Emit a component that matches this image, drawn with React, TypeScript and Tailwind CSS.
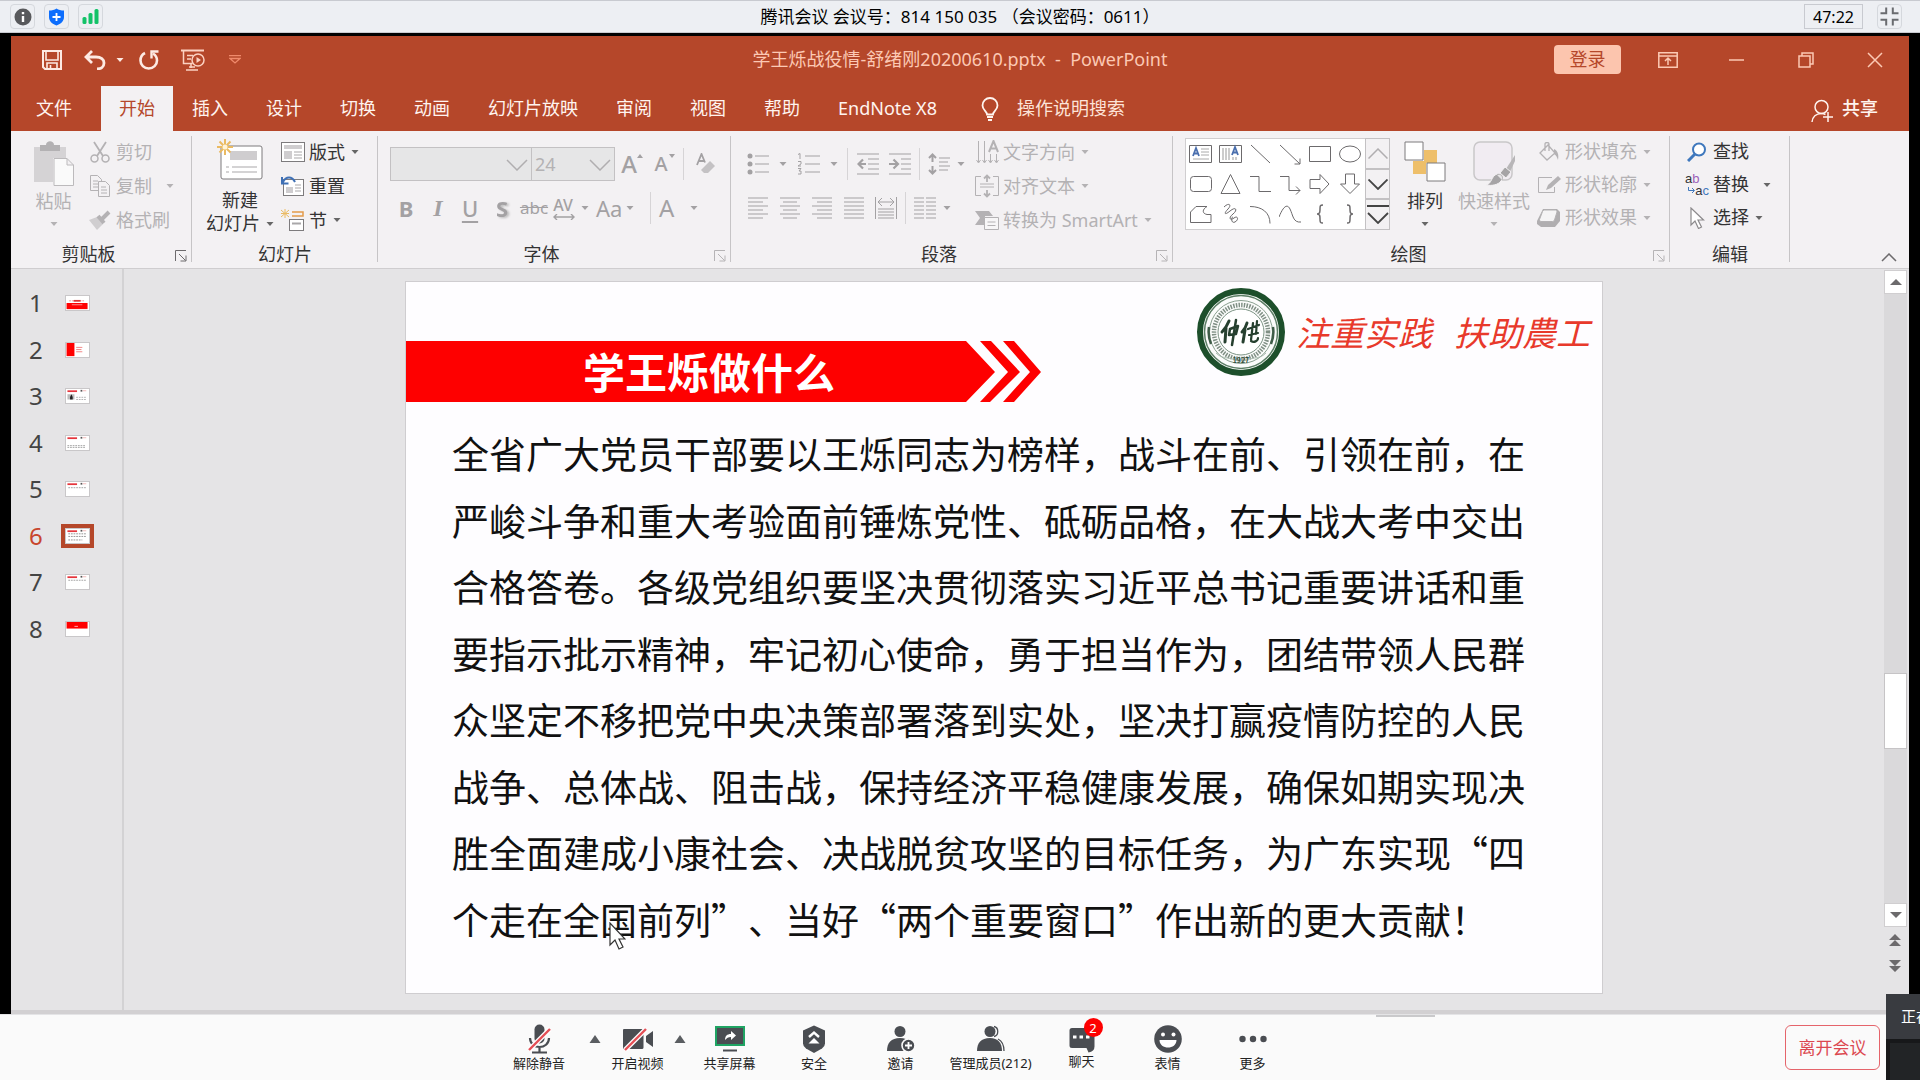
import type { ReactNode } from 'react';
import { clsx } from 'clsx';

const Svg = ({
  w,
  h,
  children,
  className,
}: {
  w: number;
  h: number;
  children: ReactNode;
  className?: string;
}) => (
  <svg
    width={w}
    height={h}
    viewBox={`0 0 ${w} ${h}`}
    fill="none"
    stroke="currentColor"
    className={clsx('shrink-0', className)}
    aria-hidden="true"
  >
    {children}
  </svg>
);

const Caret = ({ className }: { className?: string }) => (
  <Svg w={8} h={4} className={className}>
    <path d="M0.5 0h7L4 4z" fill="currentColor" stroke="none" />
  </Svg>
);

const Divider = ({ className }: { className?: string }) => (
  <span className={clsx('h-8 w-px shrink-0 bg-[#d6d4d6]', className)} />
);

/* ---------- meeting bar ---------- */

const badgeBox =
  'flex size-[25px] items-center justify-center rounded-sm border border-[#d5d8dd]';

const MeetingBar = () => (
  <header className="grid h-[33px] shrink-0 grid-cols-[1fr_auto_1fr] items-center border-t border-b border-[#c8cad0] bg-[#edeff3] text-[17px] text-black">
    <div className="flex gap-[9px] pl-[10px]">
      <button className={badgeBox} aria-label="信息">
        <Svg w={18} h={18}>
          <circle cx="9" cy="9" r="8.500" fill="#58595c" stroke="none" />
          <path d="M9 8v6M9 4v2.200" stroke="#fff" strokeWidth="2.400" />
        </Svg>
      </button>
      <button className={badgeBox} aria-label="安全">
        <Svg w={17} h={18}>
          <path
            d="M8.500 0.500c2 1.500 4.500 2 7.500 2v6.500c0 4-3 7-7.500 8.500C4 16 1 13 1 9V2.500c3 0 5.500-.5 7.500-2z"
            fill="#0d6efd"
            stroke="none"
          />
          <path d="M8.500 5v8M4.500 9h8" stroke="#fff" strokeWidth="1.800" />
        </Svg>
      </button>
      <button className={badgeBox} aria-label="网络">
        <Svg w={17} h={15}>
          <g fill="#12c268" stroke="none">
            <rect x="0.500" y="8" width="4" height="7" rx="1.500" />
            <rect x="6.500" y="4" width="4" height="11" rx="1.500" />
            <rect x="12.500" y="0" width="4" height="15" rx="1.500" />
          </g>
        </Svg>
      </button>
    </div>
    <h1>腾讯会议 会议号：814 150 035 （会议密码：0611）</h1>
    <div className="flex justify-end gap-[14px] pr-[18px]">
      <time className="flex h-[25px] w-[59px] items-center justify-center border border-[#c8cad0] text-base">
        47:22
      </time>
      <button className={badgeBox} aria-label="退出全屏">
        <Svg w={19} h={19}>
          <path
            d="M0.500 6.200H6.200V0.500M12.800 0.500V6.200H18.500M0.500 12.800H6.200V18.500M12.800 18.500V12.800H18.500"
            stroke="#6a6c70"
            strokeWidth="2"
          />
        </Svg>
      </button>
    </div>
  </header>
);

/* ---------- PowerPoint title and tabs ---------- */

const TitleBar = () => (
  <div className="grid h-[50px] grid-cols-[1fr_auto_1fr] items-center pb-[3px] text-[#fcc9b4]">
    <div className="flex items-center pl-[31px] text-[#fdeae3]">
      <button aria-label="保存">
        <Svg w={20} h={20}>
          <path d="M1 1h18v18H3l-2-2z" strokeWidth="2" />
          <path d="M4 2v8h12V2M5 19v-6h10v6M8.500 15v4" strokeWidth="1.600" />
        </Svg>
      </button>
      <button className="ml-[22px] flex items-center gap-[10px]" aria-label="撤消">
        <Svg w={22} h={20}>
          <path d="M8 1L2 7l6 6M2 7h10c5 0 8 2.500 8 6s-3 6-7 6" strokeWidth="2.800" />
        </Svg>
        <Caret />
      </button>
      <button className="ml-[15px]" aria-label="重复">
        <Svg w={20} h={20}>
          <path d="M6 3C3 4.500 1.500 7 1.500 10.500c0 4.500 3.500 8 8.200 8s8.300-3.500 8.300-8c0-3-1.500-5.500-4-7" strokeWidth="2.600" />
          <path d="M19.500 1.500h-7v7" strokeWidth="2.400" />
        </Svg>
      </button>
      <button className="ml-[22px] text-[#fcd2c2]" aria-label="从头开始">
        <Svg w={24} h={22}>
          <path d="M0 1.500h23" strokeWidth="2" />
          <path d="M2.500 2v12.500h9M6 6.500h6M6 10h4M10 15v4M5 21h12M8 18h6" strokeWidth="1.500" />
          <circle cx="17" cy="11" r="6" strokeWidth="1.500" />
          <path d="M15.500 8l4.500 3-4.500 3z" fill="currentColor" stroke="none" />
        </Svg>
      </button>
      <button className="ml-[24px] text-[#f08a6c]" aria-label="自定义快速访问工具栏">
        <Svg w={12} h={9}>
          <path d="M0 0.700h12M1 3.500h10L6 8z" strokeWidth="1.300" />
        </Svg>
      </button>
    </div>
    <h2 className="text-[18px] whitespace-pre">
      学王烁战役情-舒绪刚20200610.pptx{'  -  '}PowerPoint
    </h2>
    <div className="flex items-center justify-end">
      <button className="mr-3 h-[29px] w-[67px] rounded-sm bg-[#fcc5ae] text-[18px] leading-[29px] text-[#b5472a]">
        登录
      </button>
      <button className="flex w-[69px] justify-center" aria-label="功能区显示选项">
        <Svg w={20} h={16}>
          <path d="M0.800 0.800h18.400v14.400H0.800zM1 4h18M10 13V6.500M7 9l3-3 3 3" strokeWidth="1.500" />
        </Svg>
      </button>
      <button className="flex w-[69px] justify-center" aria-label="最小化">
        <Svg w={15} h={2}>
          <path d="M0 1h15" strokeWidth="1.500" />
        </Svg>
      </button>
      <button className="flex w-[69px] justify-center" aria-label="还原">
        <Svg w={16} h={16}>
          <path d="M1 4h11v11H1zM4 4V1h11v11h-3" strokeWidth="1.500" />
        </Svg>
      </button>
      <button className="flex w-[69px] justify-center" aria-label="关闭">
        <Svg w={16} h={16}>
          <path d="M1 1l14 14M15 1L1 15" strokeWidth="1.500" />
        </Svg>
      </button>
    </div>
  </div>
);

const tabs = ['插入', '设计', '切换', '动画', '幻灯片放映', '审阅', '视图', '帮助', 'EndNote X8'];

const TabBar = () => (
  <nav className="flex h-[45px] items-center text-[18px] text-[#fff4ef]">
    <button className="w-[90px] pr-1">文件</button>
    <button className="h-full bg-[#f3f1f3] px-[18px] text-[#b5472a]">开始</button>
    {tabs.map(tab => (
      <button key={tab} className="px-[19px] whitespace-nowrap">
        {tab}
      </button>
    ))}
    <label className="ml-[25px] flex items-center gap-[18px]">
      <Svg w={18} h={24}>
        <path d="M6 17.500c0-3-4.500-4.500-4.500-9A7.500 7.500 0 0 1 9 1a7.500 7.500 0 0 1 7.500 7.500c0 4.500-4.500 6-4.500 9zM6 20h6M7 23h4" strokeWidth="1.800" />
      </Svg>
      <input
        className="w-[160px] bg-transparent outline-none placeholder:text-[#fde3d8]"
        placeholder="操作说明搜索"
        aria-label="操作说明搜索"
      />
    </label>
    <button className="mr-[31px] ml-auto flex items-center gap-2 font-medium">
      <Svg w={23} h={24} className="mt-1">
        <circle cx="10.500" cy="8" r="6.500" strokeWidth="1.500" />
        <path d="M1 23c.5-5 4-8.500 9.500-8.500 2 0 3 .5 4 1M17 13v10M12 18h10" strokeWidth="1.500" />
      </Svg>
      共享
    </button>
  </nav>
);

/* ---------- ribbon ---------- */

const Launcher = ({ dark }: { dark?: boolean }) => (
  <button
    className={clsx('absolute right-[5px] bottom-[6px]', dark ? 'text-[#6c6a6c]' : 'text-[#b5b3b5]')}
    aria-label="更多设置"
  >
    <Svg w={12} h={12}>
      <path d="M0.500 11V0.500H11M4 4l6.500 6.500M11 5.500V11H5.500" />
    </Svg>
  </button>
);

const Group = ({
  label,
  className,
  children,
  launcher,
}: {
  label: string;
  className: string;
  children: ReactNode;
  launcher?: 'dark' | 'light';
}) => (
  <section
    aria-label={label}
    className={clsx(
      'relative flex shrink-0 flex-col after:absolute after:top-[5px] after:right-0 after:h-[126px] after:w-px after:bg-[#c6c4c6]',
      className,
    )}
  >
    <div className="flex h-[110px] pt-1">{children}</div>
    <h3
      className={clsx(
        'text-center text-[18px] leading-[28px] text-[#333]',
        launcher && 'pr-[26px]',
      )}
    >
      {label}
    </h3>
    {launcher && <Launcher dark={launcher === 'dark'} />}
  </section>
);

const Row = ({
  icon,
  text,
  caret,
  off,
  tight,
  caretGap,
}: {
  icon: ReactNode;
  text: string;
  caret?: boolean;
  off?: boolean;
  tight?: boolean;
  caretGap?: string;
}) => (
  <button
    className={clsx(
      'flex items-center text-[18px] whitespace-nowrap',
      tight ? 'h-[33px]' : 'h-[34px]',
      off ? 'text-[#b4b2b4]' : 'text-[#333]',
    )}
  >
    <span className="mr-1 flex w-6 justify-center">{icon}</span>
    {text}
    {caret && <Caret className={clsx(caretGap ?? 'ml-[6px]', !off && 'text-[#666]')} />}
  </button>
);

const ClipboardGroup = () => (
  <Group label="剪贴板" className="w-[181px]" launcher="dark">
    <button className="ml-4 flex w-[53px] flex-col items-center pt-[6px] text-[18px] leading-[28px] text-[#b4b2b4]">
      <Svg w={42} h={46}>
        <path d="M1 6h32v11H20v24H1z" fill="#d5d3d5" stroke="none" />
        <path d="M7 4h6c0-5 8-5 8 0h6v6H7z" fill="#b3b1b3" stroke="none" />
        <path d="M21 17.500h13l6.500 6.500v20.500H21zM34 17.500v6.500h6.500" fill="#fafafa" stroke="#bcbabc" />
      </Svg>
      粘贴
      <Caret className="mt-[7px]" />
    </button>
    <div className="ml-2 flex flex-col">
      <Row
        off
        text="剪切"
        icon={
          <Svg w={20} h={22}>
            <path d="M4 1l9 14M16 1L7 15" strokeWidth="1.800" />
            <circle cx="4.500" cy="17.500" r="3.500" strokeWidth="1.500" />
            <circle cx="15.500" cy="17.500" r="3.500" strokeWidth="1.500" />
          </Svg>
        }
      />
      <Row
        off
        text="复制"
        caret
        caretGap="ml-[14px]"
        icon={
          <Svg w={20} h={22}>
            <path d="M0.500 0.500h7l4 4v11h-11zM3 6h5M3 9h6M3 12h6" />
            <path d="M8.500 6.500h7l4 4v11h-11z" fill="#f3f1f3" />
            <path d="M11 12h5M11 15h6M11 18h6" />
          </Svg>
        }
      />
      <Row
        off
        text="格式刷"
        icon={
          <Svg w={22} h={20}>
            <path d="M0 10l8-3 6 7-6 6z" fill="#d0ced0" stroke="none" />
            <path d="M9 6l6 7M13 9l7-7" strokeWidth="4" />
          </Svg>
        }
      />
    </div>
  </Group>
);

const SlidesGroup = () => (
  <Group label="幻灯片" className="w-[186px]">
    <button className="ml-[14px] flex w-[68px] flex-col items-center pt-[4px] text-[18px] leading-[23px] text-[#333]">
      <Svg w={46} h={42} className="mb-[8px]">
        <rect x="4" y="7" width="41" height="33" rx="2" fill="#fff" stroke="#7d7b7d" />
        <path d="M13 12h27v9H13z" fill="#cfcdcf" stroke="none" />
        <path d="M9 28h3M9 33h3M15 28h25M15 33h25" stroke="#a9a7a9" />
        <path d="M8 0v16M0 8h16M2.500 2.500l11 11M13.500 2.500l-11 11" stroke="#eaba62" strokeWidth="2" />
        <circle cx="8" cy="8" r="2.500" fill="#fff3d8" stroke="none" />
      </Svg>
      新建
      <span className="flex items-center gap-[6px] whitespace-nowrap">
        幻灯片
        <Caret className="text-[#666]" />
      </span>
    </button>
    <div className="ml-[7px] flex flex-col">
      <Row
        text="版式"
        caret
        icon={
          <Svg w={24} h={20}>
            <rect x="0.500" y="0.500" width="23" height="19" fill="#fff" stroke="#7d7b7d" />
            <path d="M3 3h18v4H3zM3 9h8v8H3z" fill="#cfcdcf" stroke="none" />
            <path d="M13 10h8M13 13h8M13 16h8" stroke="#a9a7a9" />
          </Svg>
        }
      />
      <Row
        text="重置"
        icon={
          <Svg w={24} h={20}>
            <rect x="2.500" y="3.500" width="20" height="16" fill="#fff" stroke="#7d7b7d" />
            <path d="M5 11h7v6H5z" fill="#cfcdcf" stroke="none" />
            <path d="M14 9h6M14 12h6M14 15h6" stroke="#a9a7a9" />
            <path d="M14 6C11 0 5 0 2 6M1 1v6.500h6.500" stroke="#3f70b5" strokeWidth="2" />
          </Svg>
        }
      />
      <Row
        text="节"
        caret
        icon={
          <Svg w={24} h={22}>
            <path d="M0 1l8 7M8 1L0 8M4 0v9M0 4.500h8" stroke="#eaba62" />
            <path d="M11 3h11v4H11" stroke="#e39a4a" strokeWidth="1.500" />
            <rect x="8.500" y="10.500" width="14" height="11" fill="#fff" stroke="#7d7b7d" />
            <path d="M11 14.500h9" stroke="#a9a7a9" strokeWidth="2" />
          </Svg>
        }
      />
    </div>
  </Group>
);

const selectBox =
  'h-[34px] w-full appearance-none border border-[#c3c1c3] bg-[#e6e6e7] pl-[3px] text-[18px] text-[#b4b2b4] outline-none';

const BoxChevron = () => (
  <Svg w={22} h={12} className="pointer-events-none absolute top-[12px] right-1 text-[#b0aeb0]">
    <path d="M1 1l10 10L21 1" strokeWidth="1.500" />
  </Svg>
);

const FontGroup = () => (
  <Group label="字体" className="w-[353px] text-[#a3a1a3]" launcher="light">
    <div className="ml-3 flex flex-col">
      <div className="flex items-center pt-3">
        <div className="relative w-[142px]">
          <select className={selectBox} aria-label="字体" />
          <BoxChevron />
        </div>
        <div className="relative -ml-px w-[84px]">
          <select className={selectBox} aria-label="字号">
            <option>24</option>
          </select>
          <BoxChevron />
        </div>
        <button className="relative ml-[4px] w-5 text-[24px] leading-[34px] font-medium" aria-label="增大字号">
          A
          <Svg w={6} h={4} className="absolute top-[7px] -right-1">
            <path d="M0 4h6L3 0z" fill="currentColor" stroke="none" />
          </Svg>
        </button>
        <button className="relative ml-3 w-5 text-[20px] leading-[34px] font-medium" aria-label="减小字号">
          A
          <Svg w={6} h={4} className="absolute top-[7px] -right-1">
            <path d="M0 0h6L3 4z" fill="currentColor" stroke="none" />
          </Svg>
        </button>
        <Divider className="mx-3" />
        <button aria-label="清除所有格式">
          <Svg w={20} h={22}>
            <path d="M1 12L5.500 1 9 9.500M3 8h5" strokeWidth="1.800" />
            <path d="M5 17l9-9 5 5-7 7H8z" fill="#c4c2c4" stroke="none" />
          </Svg>
        </button>
      </div>
      <div className="flex h-[46px] items-center pt-2 text-[22px]">
        <button className="w-8 font-bold">B</button>
        <button className="w-8 font-['Liberation_Serif',serif] text-[24px] font-bold italic">I</button>
        <button className="w-8 font-medium underline underline-offset-4">U</button>
        <button className="w-8 font-bold drop-shadow-[2px_1px_1px_#bbb]">S</button>
        <button className="w-8 text-[17px] line-through">abc</button>
        <button className="flex w-[46px] items-center gap-[4px] pl-[3px]" aria-label="字符间距">
          <span className="relative w-5 text-[16px] leading-[18px] font-medium">
            AV
            <Svg w={22} h={6}>
              <path d="M1 3h20M4 0L1 3l3 3M18 0l3 3-3 3" strokeWidth="1.400" />
            </Svg>
          </span>
          <Caret className="ml-1" />
        </button>
        <button className="flex w-[46px] items-center gap-[4px]" aria-label="更改大小写">
          Aa
          <Caret />
        </button>
        <Divider className="mx-[8px]" />
        <button className="flex items-center gap-[16px] text-[24px]" aria-label="字体颜色">
          A
          <Caret />
        </button>
      </div>
    </div>
  </Group>
);

const Lines = ({ d }: { d: string }) => (
  <Svg w={22} h={22}>
    <path d={d} />
  </Svg>
);

const ParagraphGroup = () => (
  <Group label="段落" className="w-[442px] text-[#a3a1a3]" launcher="light">
    <div className="ml-4 flex w-[228px] flex-col">
      <div className="flex h-[46px] items-center pt-3">
        <button className="flex items-center gap-[10px]" aria-label="项目符号">
          <Svg w={22} h={22}>
            <path d="M8 3h14M8 11h14M8 19h14" />
            <g fill="currentColor" stroke="none">
              <circle cx="3" cy="3" r="2.500" />
              <circle cx="3" cy="11" r="2.500" />
              <circle cx="3" cy="19" r="2.500" />
            </g>
          </Svg>
          <Caret />
        </button>
        <button className="ml-[10px] flex items-center gap-[10px]" aria-label="编号">
          <Svg w={23} h={22}>
            <path d="M8 3h15M8 11h15M8 19h15M1 1.500l2-1V6M1 8.500h3V11l-3 2h3M1 15.500h3l-2 2.500h2v3H1" />
          </Svg>
          <Caret />
        </button>
        <Divider className="mx-[9px]" />
        <button aria-label="减少缩进量">
          <Svg w={22} h={22}>
            <path d="M0 1h22M11 6h11M11 11h11M11 16h11M0 21h22" />
            <path d="M9 11H2M6 6.500L1.500 11 6 15.500" strokeWidth="2.200" />
          </Svg>
        </button>
        <button className="ml-[10px]" aria-label="增加缩进量">
          <Svg w={22} h={22}>
            <path d="M0 1h22M12 6h10M12 11h10M12 16h10M0 21h22" />
            <path d="M0 11h8M4.500 6.500L9 11l-4.500 4.500" strokeWidth="2.200" />
          </Svg>
        </button>
        <Divider className="mx-[8px]" />
        <button className="flex items-center gap-[7px]" aria-label="行距">
          <Svg w={22} h={22}>
            <path d="M11 5h11M11 9h9M11 13h11M11 17h9" />
            <path d="M4.500 2v7M4.500 13v7M1 5l3.500-3.500L8 5M1 17l3.500 3.500L8 17" strokeWidth="2" />
          </Svg>
          <Caret />
        </button>
      </div>
      <div className="flex h-[46px] items-center gap-[10px] pt-2">
        <button aria-label="左对齐">
          <Lines d="M1 1h20M1 5h15M1 9h20M1 13h15M1 17h20M1 21h15" />
        </button>
        <button aria-label="居中">
          <Lines d="M1 1h20M4 5h14M1 9h20M4 13h14M1 17h20M4 21h14" />
        </button>
        <button aria-label="右对齐">
          <Lines d="M1 1h20M6 5h15M1 9h20M6 13h15M1 17h20M6 21h15" />
        </button>
        <button aria-label="两端对齐">
          <Lines d="M1 1h20M1 5h20M1 9h20M1 13h20M1 17h20M1 21h20" />
        </button>
        <button aria-label="分散对齐">
          <Lines d="M0.500 0v22M21.500 0v22M3 5h16M7 1L3 5l4 4M15 1l4 4-4 4M3 12h16M3 15h16M3 18h16M3 21h16" />
        </button>
        <Divider className="-mx-[2px]" />
        <button className="flex items-center gap-[7px]" aria-label="分栏">
          <Lines d="M0 1h10M0 5h10M0 9h10M0 13h10M0 17h10M0 21h10M12 1h10M12 5h10M12 9h10M12 13h10M12 17h10M12 21h10" />
          <Caret />
        </button>
      </div>
    </div>
    <div className="flex flex-col">
      <Row
        off
        caret
        text="文字方向"
        icon={
          <Svg w={23} h={24}>
            <path d="M2.500 1v21M8.500 1v21M14.500 14v8M20.500 14v8M0.500 20l2 3 2-3M6.500 20l2 3 2-3M12.500 20l2 3 2-3M18.500 20l2 3 2-3" />
            <path d="M13 12l4.500-11L22 12M14.500 8.500h6" strokeWidth="2" />
          </Svg>
        }
      />
      <Row
        off
        caret
        text="对齐文本"
        icon={
          <Svg w={24} h={24}>
            <path d="M6 2.500H0.500v19H6M18 2.500h5.500v19H18M5 10h14M5 13h14" />
            <path d="M12 8V2M12 16v6M9 4.500L12 1.500l3 3M9 19.500l3 3 3-3" strokeWidth="1.800" />
          </Svg>
        }
      />
      <Row
        off
        caret
        text="转换为 SmartArt"
        icon={
          <Svg w={24} h={19}>
            <path d="M0 0h14l4 5H10v9H0l5-7z" fill="#b4b2b4" stroke="none" />
            <path d="M9.500 6.500h14v12h-14z" fill="#f7f6f7" />
            <path d="M12.500 11h8M12.500 14.500h8" />
          </Svg>
        }
      />
    </div>
  </Group>
);

const shapes: { name: string; art: ReactNode }[] = [
  {
    name: '文本框',
    art: (
      <>
        <path d="M0.500 2.500h22v17H0.500z" />
        <path d="M4 13l3-8 3 8M5 10.500h4" stroke="#4a6fae" strokeWidth="1.800" />
        <path d="M12 6h8M12 9h8M12 12h8M4 16h16" stroke="#aaa" />
      </>
    ),
  },
  {
    name: '竖排文本框',
    art: (
      <>
        <path d="M0.500 2.500h22v17H0.500z" />
        <path d="M13 12l3-8 3 8M14 9.500h4" stroke="#4a6fae" strokeWidth="1.800" />
        <path d="M4 5v12M7 5v12M10 5v12M14 14v3M17 14v3" stroke="#999" />
      </>
    ),
  },
  { name: '直线', art: <path d="M2 2l19 18" /> },
  { name: '箭头', art: <path d="M1 2l20 19M21 15.500V21h-5.500" /> },
  { name: '矩形', art: <path d="M0.500 3.500h21v15h-21z" /> },
  { name: '椭圆', art: <ellipse cx="11" cy="11" rx="10.500" ry="8" /> },
  { name: '圆角矩形', art: <rect x="1.500" y="3.500" width="21" height="15" rx="3" /> },
  { name: '三角形', art: <path d="M11.500 1.500L21 20.500H2z" /> },
  { name: '肘形连接符', art: <path d="M1 3.500h9v15h12" /> },
  { name: '肘形箭头', art: <path d="M1 3.500h9v14h11M17 13.500l4 4-4 4" /> },
  { name: '右箭头', art: <path d="M1 6.500h10v-5l9 9.500-9 9.500v-5H1z" /> },
  { name: '下箭头', art: <path d="M6.500 1v10h-5l9.500 9.500L20.500 11h-5V1z" /> },
  { name: '任意多边形', art: <path d="M1.500 19.500V9L7 3.500h11c-5 3-5 7 0 8h4v8z" /> },
  { name: '自由曲线', art: <path d="M5 4c5-5 8-2 4 2s-4 7 2 2 8-1 3 3-3 7 1 4 5 2 1 4-4-5-2-5" /> },
  { name: '弧形', art: <path d="M1 3.500c12 0 20 6 20 17" /> },
  { name: '曲线', art: <path d="M0 14C4 4 8 0 11 6s3 14 11 13" /> },
  { name: '左大括号', art: <path d="M14 2c-3 0-3 1-3 4s0 5-3 5c3 0 3 2 3 5s0 4 3 4" strokeWidth="1.500" /> },
  { name: '右大括号', art: <path d="M8 2c3 0 3 1 3 4s0 5 3 5c-3 0-3 2-3 5s0 4-3 4" strokeWidth="1.500" /> },
];

const galleryBtn = 'flex flex-1 items-center justify-center border border-[#c3c1c3]';

const DrawingGroup = () => (
  <Group label="绘图" className="w-[497px]" launcher="light">
    <div className="mt-[3px] ml-[12px] flex h-[92px] w-[205px] shrink-0">
      <div className="grid flex-1 grid-cols-6 border border-[#d0ced0] bg-white text-[#6c6a6c]">
        {shapes.map(({ name, art }) => (
          <button key={name} className="flex items-center justify-center" aria-label={name}>
            <Svg w={23} h={22}>
              {art}
            </Svg>
          </button>
        ))}
      </div>
      <div className="-ml-px flex w-[25px] flex-col text-[#444]">
        <button className={clsx(galleryBtn, 'text-[#b0aeb0]')} aria-label="上一行">
          <Svg w={20} h={11}>
            <path d="M0.500 10.500L10 1l9.500 9.500" strokeWidth="1.500" />
          </Svg>
        </button>
        <button className={galleryBtn} aria-label="下一行">
          <Svg w={20} h={11}>
            <path d="M0.500 0.500L10 10l9.500-9.500" strokeWidth="1.800" />
          </Svg>
        </button>
        <button className={galleryBtn} aria-label="其他形状">
          <Svg w={22} h={19}>
            <path d="M0 1h22M1 8l10 10 10-10" strokeWidth="1.800" />
          </Svg>
        </button>
      </div>
    </div>
    <button className="ml-[13px] flex w-[44px] shrink-0 flex-col items-center pt-[6px] text-[18px] leading-[28px] text-[#333]">
      <Svg w={42} h={46}>
        <path d="M20 9h13v13H20zM9 20h13v13H9z" fill="#eebf6a" stroke="none" />
        <path d="M1 1h18v18H1zM23 22h18v18H23z" fill="#fff" stroke="#7d7b7d" />
      </Svg>
      排列
      <Caret className="mt-[7px] text-[#666]" />
    </button>
    <button className="ml-[10px] flex w-[74px] shrink-0 flex-col items-center pt-[6px] text-[18px] leading-[28px] whitespace-nowrap text-[#b4b2b4]">
      <Svg w={42} h={46}>
        <rect x="1" y="1" width="38" height="38" rx="6" stroke="#c9c7c9" strokeWidth="1.500" fill="#f1ecf2" />
        <path d="M42 14L31 31l4 4 7-15z" fill="#b8b6b8" stroke="none" />
        <path d="M32 26l6 5-5 6-6-5z" fill="#a6a4a6" stroke="#f3f1f3" />
        <path d="M13 44c6-1 5-9 11-11 5-1 7 4 4 7-3 4-9 5-15 4z" fill="#a6a4a6" stroke="#f3f1f3" />
        <path d="M24 34c3-2 7 1 5 5" fill="#e6e4e6" stroke="#b4b2b4" />
      </Svg>
      快速样式
      <Caret className="mt-[7px]" />
    </button>
    <div className="ml-[6px] flex flex-col">
      <Row
        off
        tight
        caret
        text="形状填充"
        icon={
          <Svg w={20} h={20}>
            <path d="M1 11L9 3l7 8-8 7zM6 9V2c0-2 4-2 4 0v7" strokeWidth="1.300" />
            <path d="M15 7c4 2 5 6 4 11-1-3-2-5-4-6z" fill="currentColor" stroke="none" />
          </Svg>
        }
      />
      <Row
        off
        tight
        caret
        text="形状轮廓"
        icon={
          <Svg w={23} h={18}>
            <path d="M14 1.500H0.500v15h16V11" />
            <path d="M8 14l2-5L20 0l3 3-10 9z" fill="currentColor" stroke="none" />
          </Svg>
        }
      />
      <Row
        off
        tight
        caret
        text="形状效果"
        icon={
          <Svg w={24} h={20}>
            <path d="M6 1h14l3 3v9l-5 6H4l-4-3v-3z" fill="#b0aeb0" stroke="none" />
            <path d="M7.500 2h11q2 0 1.500 2l-2.500 8q-.5 1.500-2 1.500H4q-2 0-1.500-2L5.500 3.500Q6 2 7.500 2z" fill="#f5f4f5" />
          </Svg>
        }
      />
    </div>
  </Group>
);

const EditingGroup = () => (
  <Group label="编辑" className="w-[120px]">
    <div className="ml-[15px] flex flex-col">
      <Row
        tight
        text="查找"
        icon={
          <Svg w={20} h={20}>
            <circle cx="12" cy="7.500" r="6" fill="#fff" stroke="#3f78bd" strokeWidth="2" />
            <path d="M8 12l-7 7" stroke="#3f78bd" strokeWidth="3" />
          </Svg>
        }
      />
      <Row
        tight
        text="替换"
        caret
        caretGap="ml-[14px]"
        icon={
          <span className="flex w-6 flex-col font-['Liberation_Sans',sans-serif] text-[13px] leading-[12px] font-medium">
            <span className="h-[12px] text-left">
              a<span className="text-[#9a5fb8]">b</span>
            </span>
            <span className="flex h-[12px] items-center justify-end">
              <Svg w={7} h={7} className="text-[#3f78bd]">
                <path d="M0.500 0v3.500H6M4 1l2.500 2.500L4 6" />
              </Svg>
              a<span className="text-[#3f78bd]">c</span>
            </span>
          </span>
        }
      />
      <Row
        tight
        text="选择"
        caret
        icon={
          <Svg w={16} h={22}>
            <path d="M2 1v17l4-4 3.500 7.500 3-1.500L9 13h5.500z" fill="#fff" stroke="#8c8a8c" strokeWidth="1.200" />
          </Svg>
        }
      />
    </div>
  </Group>
);

const Ribbon = () => (
  <div className="flex h-[138px] border-b border-[#cfcdcf] bg-[#f3f1f3]">
    <ClipboardGroup />
    <SlidesGroup />
    <FontGroup />
    <ParagraphGroup />
    <DrawingGroup />
    <EditingGroup />
    <button className="mt-auto mr-3 mb-[6px] ml-auto text-[#6c6a6c]" aria-label="折叠功能区">
      <Svg w={16} h={9}>
        <path d="M1 8l7-7 7 7" strokeWidth="1.500" />
      </Svg>
    </button>
  </div>
);

/* ---------- workspace ---------- */

const header = (
  <>
    <path d="M1 2.500h11" stroke="#e5353c" strokeWidth="2" />
    <path d="M16 2h2" stroke="#555" strokeWidth="2" />
    <path d="M18.500 2h4" stroke="#f0b0b0" />
  </>
);

const thumbs: ReactNode[] = [
  <>
    <path d="M0 8h24v7H0z" fill="#f00" stroke="none" />
    <path d="M3 5.500h18" stroke="#e88" strokeDasharray="2 1" />
    <path d="M8 5.500h8" stroke="#d33" strokeWidth="2" />
    <path d="M6 10h12" stroke="#f99" />
  </>,
  <>
    <path d="M0 0h9v15H0z" fill="#f00" stroke="none" />
    <path d="M11 5h7M11 7.500h6M11 10h7" stroke="#e77" />
  </>,
  <>
    {header}
    <path d="M1 6h8v6H1z" fill="#bbb" stroke="none" />
    <path d="M4 12v-3l1.500-3L7 9v3z" fill="#222" stroke="none" />
    <path d="M11 9.500h11M11 12h11" stroke="#aaa" strokeDasharray="2 1" />
  </>,
  <>
    {header}
    <path d="M1 11h21M1 13h21" stroke="#999" strokeDasharray="2 1" />
  </>,
  <>
    {header}
    <path d="M2 6.500h20" stroke="#999" strokeDasharray="2 1" />
  </>,
  <>
    {header}
    <path d="M2 5.500h20M2 8.500h20M2 12.500h16" stroke="#888" strokeDasharray="2 1" />
  </>,
  <>
    {header}
    <path d="M2 6h20" stroke="#999" strokeDasharray="2 1" />
  </>,
  <>
    <path d="M0 0h24v7.500H0z" fill="#f00" stroke="none" />
    <path d="M9 5h4" stroke="#fbb" />
  </>,
];

const current = 5;

const SlideList = () => (
  <aside className="w-[113px] shrink-0 border-r-2 border-[#d3d2d4] pt-[11px]">
    <ol className="flex h-[372px] flex-col">
      {thumbs.map((art, i) => (
        <li key={i} className="flex-1">
          <button
            className={clsx(
              'flex h-full items-center pl-[18px] text-[24px]',
              i === current ? 'text-[#c8452c]' : 'text-[#444]',
            )}
          >
            <span className="w-[32px] text-left">{i + 1}</span>
            <span
              className={clsx(
                'border-4',
                i === current ? 'border-[#b5472a] bg-[#b5472a]' : 'border-transparent',
              )}
            >
              <Svg w={25} h={16} className="border border-[#c9c7c9] bg-white">
                {art}
              </Svg>
            </span>
          </button>
        </li>
      ))}
    </ol>
  </aside>
);

const lines = [
  '全省广大党员干部要以王烁同志为榜样，战斗在前、引领在前，在',
  '严峻斗争和重大考验面前锤炼党性、砥砺品格，在大战大考中交出',
  '合格答卷。各级党组织要坚决贯彻落实习近平总书记重要讲话和重',
  '要指示批示精神，牢记初心使命，勇于担当作为，团结带领人民群',
  '众坚定不移把党中央决策部署落到实处，坚决打赢疫情防控的人民',
  '战争、总体战、阻击战，保持经济平稳健康发展，确保如期实现决',
  '胜全面建成小康社会、决战脱贫攻坚的目标任务，为广东实现“四',
  '个走在全国前列”、当好“两个重要窗口”作出新的更大贡献！',
];

const Seal = () => (
  <svg width="90" height="90" viewBox="0 0 90 90" fill="none" aria-hidden="true">
    <circle cx="45" cy="45" r="41" fill="#fbfcfb" stroke="#1d4f2b" strokeWidth="6" />
    <circle cx="45" cy="45" r="36.500" stroke="#5d7f66" strokeWidth="1.500" />
    <circle cx="45" cy="45" r="31.500" stroke="#8aa090" />
    <circle cx="45" cy="45" r="27" stroke="#7f8f84" strokeWidth="4.500" strokeDasharray="1.500 1.200" />
    <circle cx="45" cy="45" r="23" fill="#fff" stroke="#7b9383" />
    <path d="M13 40c-1 6 0 12 2 17M77 40c1 6 0 12-2 17" stroke="#3e5c47" strokeWidth="2.500" />
    <path d="M20 66c8 8 14 2 25 10 11-8 17-2 25-10" stroke="#a9bbaf" />
    <text x="45" y="76" textAnchor="middle" fontSize="7" fontWeight="700" fill="#33503c">
      1927
    </text>
    <g stroke="#26402f" strokeLinecap="round" strokeLinejoin="round">
      <path d="M33 34c-2 5-4 8-7 11M30 41l-1 14" strokeWidth="3" />
      <path d="M34 42l8-3-2 8-7 1zM40 33l-4 25" strokeWidth="2.500" />
      <path d="M51 36c-1 4-3 7-5 9M49 43l-2 12" strokeWidth="3" />
      <path d="M52 42l11-4M57 36l-2 17M61 34l-1 13M53 48l9-2M55 54c3 2 7 0 7-3" strokeWidth="2.200" />
    </g>
  </svg>
);

const Slide = () => (
  <article className="relative flex aspect-[1196/711] h-full flex-col bg-[#fefdff] font-['Noto_Sans_CJK_SC',sans-serif] outline outline-[#cfcdd0]">
    <div className="absolute top-[5px] right-[12px] flex items-center gap-[10px]">
      <Seal />
      <p className="flex gap-[22px] text-[34px] leading-[44px] text-[#e8392b] italic">
        <span>注重实践</span>
        <span>扶助農工</span>
      </p>
    </div>
    <div className="mt-[59px] flex h-[61px]">
      <h2 className="w-[560px] bg-[#fe0000] pl-[46px] text-center text-[42px] leading-[60px] font-bold text-white">
        学王烁做什么
      </h2>
      <svg width="76" height="61" viewBox="0 0 76 61" fill="#fe0000" aria-hidden="true">
        <path d="M0 0l29 31L0 61zM14 0h11l29 31-30 30H14l28-30zM37 0h11l27 31-27 30H37l27-30z" />
      </svg>
    </div>
    <div className="mt-[18px] mb-[41px] flex flex-1 flex-col pl-[46px] text-[37px] whitespace-nowrap text-[#111] [text-spacing-trim:space-all]">
      {lines.map(line => (
        <p key={line} className="flex flex-1 items-center leading-[66px]">
          {line}
        </p>
      ))}
    </div>
    <Svg w={18} h={30} className="absolute top-[640px] left-[202px]">
      <path d="M2 1v22l5-5 4 9 4-2-4-8h6z" fill="#fff" stroke="#333" strokeWidth="1.200" />
    </Svg>
  </article>
);

const ScrollBar = () => (
  <div className="flex w-[25px] shrink-0 flex-col items-start text-[#6c6a6c]">
    <button
      className="mt-px flex h-[24px] w-[23px] items-center justify-center border border-[#d0ced0] bg-white"
      aria-label="向上滚动"
    >
      <Svg w={12} h={6}>
        <path d="M0 6h12L6 0z" fill="currentColor" stroke="none" />
      </Svg>
    </button>
    <div className="flex w-[23px] flex-1 flex-col bg-[#dad9db]">
      <span className="mt-[379px] h-[76px] border border-[#c6c4c6] bg-white" />
    </div>
    <button
      className="flex h-[24px] w-[23px] items-center justify-center border border-[#d0ced0] bg-white"
      aria-label="向下滚动"
    >
      <Svg w={12} h={6}>
        <path d="M0 0h12L6 6z" fill="currentColor" stroke="none" />
      </Svg>
    </button>
    <button className="mt-[7px] ml-[5px]" aria-label="上一张幻灯片">
      <Svg w={12} h={12}>
        <path d="M0 6h12L6 0zM0 12h12L6 6z" fill="currentColor" stroke="none" />
      </Svg>
    </button>
    <button className="mt-[14px] mb-[38px] ml-[5px]" aria-label="下一张幻灯片">
      <Svg w={12} h={12}>
        <path d="M0 0h12L6 6zM0 6h12l-6 6z" fill="currentColor" stroke="none" />
      </Svg>
    </button>
  </div>
);

/* ---------- meeting controls ---------- */

const Control = ({
  label,
  icon,
  className = 'w-[85px]',
  raised,
}: {
  label: string;
  icon: ReactNode;
  className?: string;
  raised?: boolean;
}) => (
  <button
    className={clsx(
      'flex flex-col items-center text-[13px] leading-[18px] whitespace-nowrap text-[#222]',
      raised && '-mt-[3px]',
      className,
    )}
  >
    <span className="relative flex h-[30px] items-center text-[#4a4d52]">{icon}</span>
    {label}
  </button>
);

const UpArrow = ({ label, className }: { label: string; className: string }) => (
  <button className={clsx('-mt-[17px] flex justify-center text-[#5a5d61]', className)} aria-label={label}>
    <Svg w={12} h={8}>
      <path d="M0.500 8h11L6 0z" fill="currentColor" stroke="none" />
    </Svg>
  </button>
);

const Controls = () => (
  <footer className="relative flex h-[66px] shrink-0 items-center border-t border-[#e4e4e6] bg-[#fafafa]">
    <span className="absolute top-0 left-[1376px] h-[2px] w-[59px] bg-[#c9c9cb]" />
    <nav className="flex flex-1 items-center justify-center pl-[4px]">
      <Control
        label="解除静音"
        icon={
          <Svg w={24} h={30}>
            <rect x="7.500" y="0.500" width="10" height="19" rx="5" fill="currentColor" stroke="none" />
            <path d="M3 14c0 12 19 12 19 0M12.500 23v5M5 28.500h15" strokeWidth="2.200" />
            <path d="M2 26L23 5" stroke="#fff" strokeWidth="5" />
            <path d="M2 26L23 5" stroke="#e54f56" strokeWidth="2.400" />
          </Svg>
        }
      />
      <UpArrow label="音频选项" className="w-[26px]" />
      <Control
        label="开启视频"
        className="w-[60px]"
        icon={
          <Svg w={32} h={24}>
            <path d="M1 3q0-1 1-1h18q1.500 0 1.500 1.500v17q0 1.500-1.500 1.500H2q-1 0-1-1zM24 9l7-5v16l-7-5z" fill="currentColor" stroke="none" />
            <path d="M3 23L24 2" stroke="#fff" strokeWidth="5" />
            <path d="M3 23L24 2" stroke="#e54f56" strokeWidth="2.400" />
          </Svg>
        }
      />
      <UpArrow label="视频选项" className="w-[24px]" />
      <Control
        label="共享屏幕"
        className="w-[76px]"
        icon={
          <Svg w={30} h={27}>
            <rect x="1" y="2" width="28" height="18" fill="#4a4d52" stroke="#1fa463" strokeWidth="2" />
            <path d="M10 15c0-4 2-6 6-6V6l5 4.500-5 4.500v-3c-3 0-4 1-6 3z" fill="#fff" stroke="none" />
            <path d="M8 25.500h14" strokeWidth="2" />
          </Svg>
        }
      />
      <Control
        label="安全"
        className="w-[93px]"
        icon={
          <Svg w={24} h={28}>
            <path d="M12 0.500l11 5v13q0 3-3 5l-8 4.500-8-4.500q-3-2-3-5v-13z" fill="currentColor" stroke="none" />
            <path d="M7 12l5-4.500 5 4.500" stroke="#fff" strokeWidth="2.400" />
            <path d="M6.500 18.500L12 13l5.500 5.500z" fill="#fff" stroke="none" />
          </Svg>
        }
      />
      <Control
        label="邀请"
        className="w-[80px]"
        icon={
          <Svg w={28} h={28}>
            <circle cx="13" cy="6.500" r="5.500" fill="currentColor" stroke="none" />
            <path d="M0 26c0-8 4-13 13-13s13 5 13 13z" fill="currentColor" stroke="none" />
            <circle cx="21.500" cy="20.500" r="6.500" fill="#4a4d52" stroke="#fafafa" strokeWidth="1.600" />
            <path d="M21.500 17v7M18 20.500h7" stroke="#fff" strokeWidth="1.800" />
          </Svg>
        }
      />
      <Control
        label="管理成员(212)"
        className="w-[100px]"
        icon={
          <Svg w={28} h={28}>
            <path d="M17 1.500c5 1 5 9 0 10M21 14c4 2 6 6 6 12" strokeWidth="1.300" />
            <circle cx="13" cy="6.500" r="5.500" fill="currentColor" stroke="none" />
            <path d="M0 26c0-8 4-13 13-13 8 0 12 5 12 13z" fill="currentColor" stroke="none" />
          </Svg>
        }
      />
      <Control
        label="聊天"
        raised
        className="w-[82px]"
        icon={
          <>
            <Svg w={26} h={26} className="mt-[6px]">
              <path d="M3 1h20q2.500 0 2.500 2.500v16q0 5-6 6l-2-4.500H3q-2.500 0-2.500-2.500v-15Q.5 1 3 1z" fill="currentColor" stroke="none" />
              <path d="M4 10h3.500M10.500 10H14M17 10h3.500" stroke="#fff" strokeWidth="3" />
            </Svg>
            <span className="absolute -top-[4px] -right-2 flex size-[19px] items-center justify-center rounded-full bg-[#fe0000] text-[13px] text-white">
              2
            </span>
          </>
        }
      />
      <Control
        label="表情"
        className="w-[90px]"
        icon={
          <Svg w={28} h={28}>
            <circle cx="14" cy="14" r="13.800" fill="currentColor" stroke="none" />
            <circle cx="9" cy="9.500" r="2" fill="#fff" stroke="none" />
            <circle cx="19.500" cy="9.500" r="2" fill="#fff" stroke="none" />
            <path d="M5.500 15h17c0 10-17 10-17 0z" fill="#fff" stroke="none" />
          </Svg>
        }
      />
      <Control
        label="更多"
        className="w-[80px]"
        icon={
          <Svg w={28} h={8}>
            <g fill="currentColor" stroke="none">
              <circle cx="3.500" cy="4" r="3.200" />
              <circle cx="14" cy="4" r="3.200" />
              <circle cx="24.500" cy="4" r="3.200" />
            </g>
          </Svg>
        }
      />
    </nav>
    <button className="mr-10 h-[45px] w-[95px] rounded-md border border-[#e5646b] text-[17px] text-[#dc4850]">
      离开会议
    </button>
    <aside className="absolute right-0 bottom-0 h-[86px] w-[34px] overflow-hidden bg-[#17181a] whitespace-nowrap text-white">
      <p className="h-[45px] bg-[#393b40] pl-[15px] text-[15px] leading-[45px]">正在</p>
      <div className="mt-1 ml-1 h-10 bg-[#222426]" />
    </aside>
  </footer>
);

export default function App() {
  return (
    <div className="flex h-screen min-h-[1080px] flex-col overflow-hidden bg-black font-['Noto_Sans','Noto_Sans_CJK_SC',sans-serif]">
      <MeetingBar />
      <main className="flex flex-1 flex-col px-[11px] pt-[3px]">
        <div className="bg-[#b5472a]">
          <TitleBar />
          <TabBar />
        </div>
        <Ribbon />
        <div className="flex min-h-0 flex-1 border-b-4 border-[#d2d0d2] bg-[#e5e4e6]">
          <SlideList />
          <div className="flex min-w-0 flex-1 justify-center pt-[13px] pb-[17px]">
            <Slide />
          </div>
          <ScrollBar />
        </div>
      </main>
      <Controls />
    </div>
  );
}
